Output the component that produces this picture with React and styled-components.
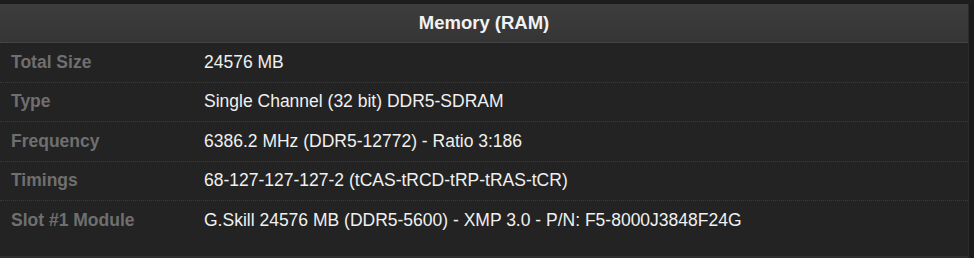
import styled, { createGlobalStyle } from 'styled-components';

const GlobalStyle = createGlobalStyle`
  html, body {
    margin: 0;
    padding: 0;
    background: #1d1d1d;
  }
  body {
    font-family: 'Liberation Sans', Arial, sans-serif;
  }
`;

const rows = [
  { label: 'Total Size', value: '24576 MB' },
  { label: 'Type', value: 'Single Channel (32 bit) DDR5-SDRAM' },
  { label: 'Frequency', value: '6386.2 MHz (DDR5-12772) - Ratio 3:186' },
  { label: 'Timings', value: '68-127-127-127-2 (tCAS-tRCD-tRP-tRAS-tCR)' },
  { label: 'Slot #1 Module', value: 'G.Skill 24576 MB (DDR5-5600) - XMP 3.0 - P/N: F5-8000J3848F24G' },
];

const App = () => {
  return (
    <>
      <GlobalStyle />
      <Page>
        <Panel>
          <Header>Memory (RAM)</Header>
          <Table>
            {rows.map((row) => (
              <Row key={row.label}>
                <Label>{row.label}</Label>
                <Value>{row.value}</Value>
              </Row>
            ))}
          </Table>
          <Footer />
        </Panel>
        <Gutter />
      </Page>
    </>
  );
};

export default App;

const Page = styled.div`
  display: flex;
  width: 974px;
  height: 258px;
  padding-top: 4px;
  box-sizing: border-box;
  background: #1d1d1d;
  overflow: hidden;
`;

const Panel = styled.section`
  width: 969px;
  display: flex;
  flex-direction: column;
  background: #232323;
  border-bottom: 2px solid #2e2e2e;
  box-sizing: border-box;
`;

const Header = styled.h2`
  margin: 0;
  height: 38px;
  display: flex;
  align-items: center;
  justify-content: center;
  background: linear-gradient(#3d3d3d, #353535);
  border-bottom: 1px dotted #4a4a4a;
  color: #f2f2f2;
  font-size: 18.5px;
  font-weight: bold;
`;

const Table = styled.div`
  display: flex;
  flex-direction: column;
`;

const Row = styled.div`
  display: grid;
  grid-template-columns: 193px 1fr;
  align-items: center;
  height: 38.5px;
  padding-left: 11px;
  border-bottom: 1px dotted #3a3a3a;

  &:last-child {
    border-bottom: none;
  }
`;

const Label = styled.span`
  color: #6f6f6f;
  font-size: 17.5px;
  font-weight: bold;
`;

const Value = styled.span`
  color: #f0f0f0;
  font-size: 17.5px;
`;

const Footer = styled.div`
  flex: 1;
`;

const Gutter = styled.div`
  width: 5px;
  border-left: 1px solid #2a2a2a;
  background: #1b1b1b;
`;
